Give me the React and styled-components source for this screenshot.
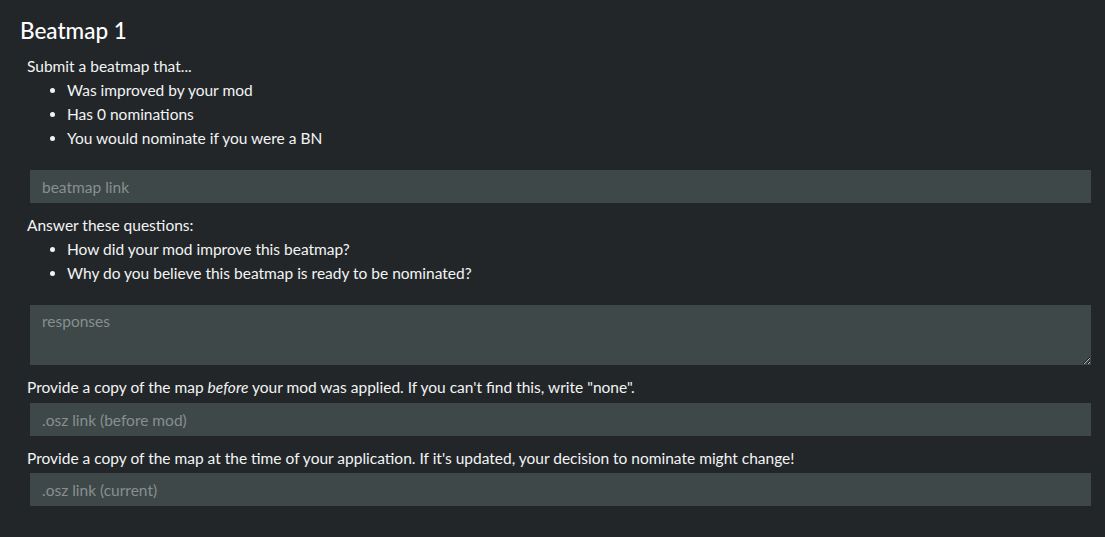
import React from 'react'
import styled, { createGlobalStyle } from 'styled-components';

const GlobalStyle = createGlobalStyle`
    body{
        margin: 0;
        background: #222629;
        color: #f2f4f4;
        font-family: "Lato", "Noto Sans", sans-serif;
        font-size: 15.5px;
    }
`;

function App() {
    return (
        <>
            <GlobalStyle />
            <FormStyled>
                <h2>Beatmap 1</h2>
                <div className="content">
                    <p>Submit a beatmap that...</p>
                    <ul>
                        <li>Was improved by your mod</li>
                        <li>Has 0 nominations</li>
                        <li>You would nominate if you were a BN</li>
                    </ul>
                    <Field type="text" placeholder="beatmap link" $top={20} />
                    <p className="after-field">Answer these questions:</p>
                    <ul>
                        <li>How did your mod improve this beatmap?</li>
                        <li>Why do you believe this beatmap is ready to be nominated?</li>
                    </ul>
                    <Responses placeholder="responses" />
                    <p className="after-field">Provide a copy of the map <em>before</em> your mod was applied. If you can't find this, write "none".</p>
                    <Field type="text" placeholder=".osz link (before mod)" $top={4} />
                    <p className="after-field">Provide a copy of the map at the time of your application. If it's updated, your decision to nominate might change!</p>
                    <Field type="text" placeholder=".osz link (current)" $top={3} />
                </div>
            </FormStyled>
        </>
    )
}

const FormStyled = styled.div`
    padding: 18px 14px 30px 20px;
    h2{
        margin: 0 0 10px;
        font-size: 22.5px;
        line-height: 26px;
        font-weight: 500;
        color: #ffffff;
    }
    .content{
        padding-left: 7px;
    }
    p{
        margin: 0;
        line-height: 24px;
    }
    .after-field{
        margin-top: 10px;
    }
    ul{
        margin: 0;
        padding-left: 40px;
        li{
            line-height: 24px;
        }
    }
    em{
        font-style: italic;
    }
`;

const Field = styled.input`
    display: block;
    box-sizing: border-box;
    width: calc(100% - 3px);
    height: 33px;
    margin: ${props => props.$top}px 0 0 3px;
    padding: 0 12px;
    border: none;
    outline: none;
    background: #3e4849;
    color: #f2f4f4;
    font-family: inherit;
    font-size: 15.5px;
    &::placeholder{
        color: #878f8f;
    }
`;

const Responses = styled.textarea`
    display: block;
    box-sizing: border-box;
    width: calc(100% - 3px);
    height: 60px;
    margin: 20px 0 0 3px;
    padding: 7px 12px;
    border: none;
    outline: none;
    background: #3e4849;
    color: #f2f4f4;
    font-family: inherit;
    font-size: 15.5px;
    &::placeholder{
        color: #878f8f;
    }
`;

export default App;
